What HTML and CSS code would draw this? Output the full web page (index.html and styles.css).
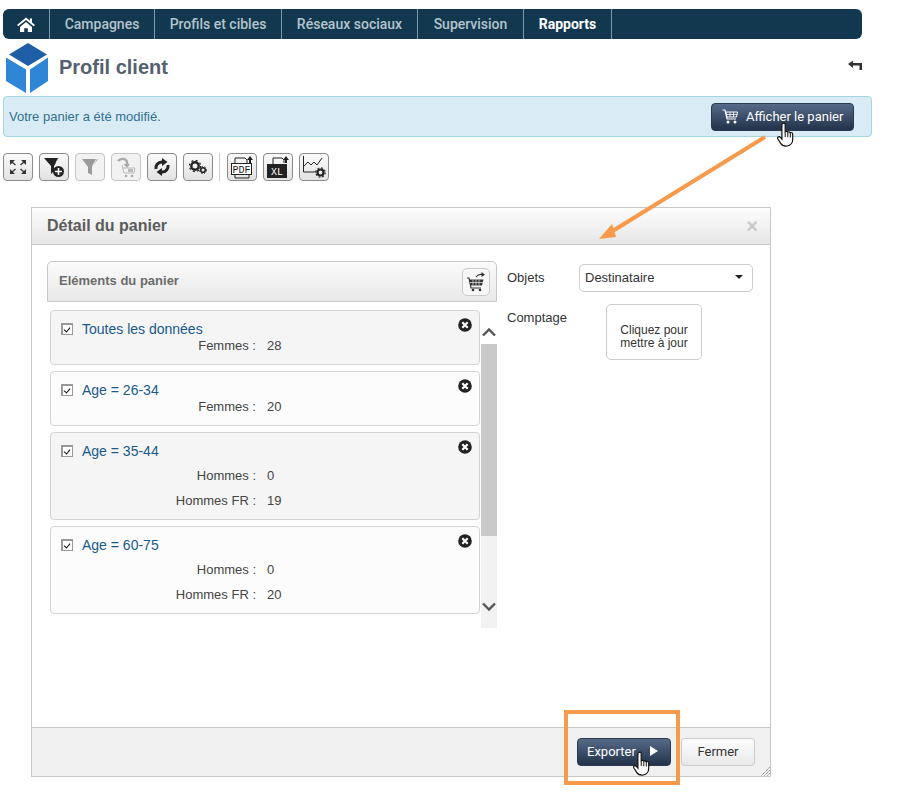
FILE: index.html
```html
<!DOCTYPE html>
<html lang="fr">
<head>
    <meta charset="UTF-8">
    <meta name="viewport" content="width=device-width, initial-scale=1.0">
    <title>Profil client</title>
    <link rel="stylesheet" href="styles.css">
</head>
<body>
    <svg class="defs" width="0" height="0">
        <symbol id="hand" viewBox="0 0 18 26">
            <path d="M6 1.500c1-.8 2.200 0 2.200 1.200v7l1-.3c.7-.2 1.300.1 1.500.6l.9-.1c.7-.1 1.200.2 1.400.7l.9-.1c1-.1 1.800.6 1.800 1.700v5.300c0 3-2 6-5.500 6.500-3.500.4-5.500-.8-6.500-2.600L1 17.200c-.6-1-.5-1.800.2-2.300.8-.5 1.600-.2 2.200.5l1.500 1.700V2.800c0-.5.300-1 1.100-1.300z" fill="#fff" stroke="#111" stroke-width="1.200"/>
            <path d="M8.200 10v5M10.800 10.200v5M13.300 10.700v4.800" fill="none" stroke="#111" stroke-width="1"/>
        </symbol>
        <symbol id="close" viewBox="0 0 14 14">
            <circle cx="7" cy="7" r="6.800" fill="#222"/>
            <path d="M4.300 4.300l5.400 5.400M9.700 4.300l-5.400 5.400" stroke="#fff" stroke-width="2.200"/>
        </symbol>
    </svg>

    <div class="page">
        <nav class="topnav">
            <a class="topnav-item topnav-home" href="#">
                <svg width="18" height="15" viewBox="0 0 18 15"><path d="M9 .5L0 8l1.300 1.300L9 3l7.700 6.300L18 8l-3-2.500V1.500h-2.200v2.200z" fill="#fff"/><path d="M3 10l6-5 6 5v5h-4.200v-3.800H7.200V15H3z" fill="#fff"/></svg>
            </a>
            <a class="topnav-item topnav-w105" href="#">Campagnes</a>
            <a class="topnav-item topnav-w127" href="#">Profils et cibles</a>
            <a class="topnav-item topnav-w136" href="#">Réseaux sociaux</a>
            <a class="topnav-item topnav-w106" href="#">Supervision</a>
            <a class="topnav-item topnav-w88 active" href="#">Rapports</a>
        </nav>

        <header class="title-row">
            <svg class="logo" width="44" height="50" viewBox="0 0 44 50">
                <path d="M22 0L41 11.500 22 23 3 11.500z" fill="#1f5fa8"/>
                <path d="M0 14.500L20 26.500V50L0 38z" fill="#2f86d6"/>
                <path d="M42 14.500L24 26.500V50l18-12z" fill="#2f86d6"/>
            </svg>
            <h1>Profil client</h1>
            <svg class="back" width="14" height="10" viewBox="0 0 14 10"><path d="M0 4L5 .5V3h9v7h-2.500V5.500H5V8z" fill="#333"/></svg>
        </header>

        <div class="message">
            <span>Votre panier a été modifié.</span>
            <button class="btn-dark btn-cart">
                <svg width="16" height="15" viewBox="0 0 16 15"><path d="M.5 1H3l2 9h9" fill="none" stroke="#fff" stroke-width="1.200"/><path d="M4 3h11.500l-1 5H5z" fill="none" stroke="#fff"/><path d="M4.500 5.500h10.500M8 3v5M11.500 3v5" stroke="#fff" stroke-width=".8"/><circle cx="6" cy="13" r="1.500" fill="#fff"/><circle cx="13" cy="13" r="1.500" fill="#fff"/></svg>
                Afficher le panier
            </button>
        </div>

        <div class="toolbar">
            <button class="tool">
                <svg width="18" height="16" viewBox="0 0 18 16"><path d="M1 1h5L1 6zM17 1v5l-5-5zM1 15v-5l5 5zM17 15h-5l5-5z" fill="#333"/><path d="M3 3l3.500 3M15 3l-3.500 3M3 13l3.500-3M15 13l-3.500-3" stroke="#333" stroke-width="1.300"/></svg>
            </button>
            <button class="tool">
                <svg width="22" height="22" viewBox="0 0 22 22"><path d="M1 2h15l-5 8v5l-3 3v-8z" fill="#222"/><path d="M13 7l3-6" stroke="#eee"/><circle cx="15.500" cy="15.500" r="5.500" fill="#222"/><path d="M15.500 12v7M12 15.500h7" stroke="#fff" stroke-width="1.600"/></svg>
            </button>
            <button class="tool tool-off">
                <svg width="18" height="20" viewBox="0 0 18 20"><path d="M1 2h16l-6 8v8l-4-2v-6z" fill="#9a9a9a"/><path d="M11.500 9l4-7" stroke="#eee"/></svg>
            </button>
            <button class="tool tool-off">
                <svg width="20" height="22" viewBox="0 0 20 22"><path d="M2 5c3-3 8-3 9 1v3" fill="none" stroke="#aaa" stroke-width="2.400"/><path d="M7.500 8l3.500 4 3-4z" fill="#aaa"/><path d="M6 12h13l-1 5H8L6 9" fill="none" stroke="#bbb"/><path d="M12 13h5v3h-5z" fill="#bbb"/><circle cx="10" cy="20" r="1.300" fill="#aaa"/><circle cx="16" cy="20" r="1.300" fill="#aaa"/></svg>
            </button>
            <button class="tool">
                <svg width="20" height="18" viewBox="0 0 20 18"><path d="M4 11A6 6 0 0 1 10 4" fill="none" stroke="#222" stroke-width="3"/><path d="M10 0l5.500 4L10 8z" fill="#222"/><path d="M16 7A6 6 0 0 1 10 14" fill="none" stroke="#222" stroke-width="3"/><path d="M10 10l-5.500 4L10 18z" fill="#222"/></svg>
            </button>
            <button class="tool">
                <svg width="18" height="14" viewBox="0 0 18 14"><circle cx="6" cy="6" r="3.700" fill="none" stroke="#222" stroke-width="2.400"/><circle cx="6" cy="6" r="5.600" fill="none" stroke="#222" stroke-width="1.200" stroke-dasharray="2 2.400"/><circle cx="14" cy="10" r="2.300" fill="none" stroke="#222" stroke-width="1.600"/><circle cx="14" cy="10" r="3.600" fill="none" stroke="#222" stroke-width=".9" stroke-dasharray="1.500 1.500"/></svg>
            </button>
            <span class="tool-sep"></span>
            <button class="tool">
                <svg width="24" height="24" viewBox="0 0 24 24"><path d="M5 9V3h10l2 2v3" fill="none" stroke="#222"/><path d="M20 1l3 4h-2v3h-2V5h-2z" fill="#222"/><rect x="1.500" y="8.500" width="20" height="11" fill="#fff" stroke="#222"/><text class="tool-label" x="11.500" y="18" text-anchor="middle">PDF</text><path d="M5 20v3h14v-3" fill="none" stroke="#222"/></svg>
            </button>
            <button class="tool">
                <svg width="24" height="24" viewBox="0 0 24 24"><path d="M7 9V3h9l2 2v3" fill="none" stroke="#222"/><path d="M20 1l3 4h-2v3h-2V5h-2z" fill="#222"/><rect x="1" y="9" width="20" height="14" fill="#222"/><text class="tool-label tool-label-xl" x="11" y="19.500" text-anchor="middle">XL</text></svg>
            </button>
            <button class="tool">
                <svg width="24" height="24" viewBox="0 0 24 24"><path d="M1.500 1v16H14" fill="none" stroke="#222"/><path d="M2 11l4-4 3 3 3-3 3 3 5-7" fill="none" stroke="#222"/><circle cx="18.500" cy="17.500" r="3" fill="none" stroke="#222" stroke-width="2.200"/><circle cx="18.500" cy="17.500" r="4.700" fill="none" stroke="#222" stroke-width="1.200" stroke-dasharray="1.800 1.900"/></svg>
            </button>
        </div>

        <section class="modal">
            <div class="modal-head">
                <h2>Détail du panier</h2>
                <span class="modal-x">×</span>
            </div>
            <div class="modal-body">
                <div class="col-left">
                    <div class="panel-head">
                        <span class="panel-title">Eléments du panier</span>
                        <button class="cart-btn">
                            <svg width="20" height="20" viewBox="0 0 20 20"><path d="M1 6h2l2 10h10" fill="none" stroke="#333" stroke-width="1.200"/><path d="M3.500 7.500h14l-1.500 6H5z" fill="#333"/><path d="M7 7.500v6M10 7.500v6M13 7.500v6M4 10.500h13" stroke="#eee" stroke-width=".7"/><circle cx="7" cy="18" r="1.300" fill="#333"/><circle cx="14" cy="18" r="1.300" fill="#333"/><path d="M10 5c2-2.500 4-3 6-2.500" fill="none" stroke="#333" stroke-width="1.200"/><path d="M15.500 0l3.500 2.800-3.500 2.200z" fill="#333"/></svg>
                        </button>
                    </div>
                    <div class="list-wrap">
                        <div class="list">
                            <div class="card card-shade card-small">
                                <div class="card-title"><span class="check"></span>Toutes les données</div>
                                <div class="card-rows">
                                    <div class="card-row"><span class="row-label">Femmes :</span><span>28</span></div>
                                </div>
                                <svg class="card-x"><use href="#close"/></svg>
                            </div>
                            <div class="card card-small">
                                <div class="card-title"><span class="check"></span>Age = 26-34</div>
                                <div class="card-rows">
                                    <div class="card-row"><span class="row-label">Femmes :</span><span>20</span></div>
                                </div>
                                <svg class="card-x"><use href="#close"/></svg>
                            </div>
                            <div class="card card-shade">
                                <div class="card-title"><span class="check"></span>Age = 35-44</div>
                                <div class="card-rows">
                                    <div class="card-row"><span class="row-label">Hommes :</span><span>0</span></div>
                                    <div class="card-row"><span class="row-label">Hommes FR :</span><span>19</span></div>
                                </div>
                                <svg class="card-x"><use href="#close"/></svg>
                            </div>
                            <div class="card">
                                <div class="card-title"><span class="check"></span>Age = 60-75</div>
                                <div class="card-rows">
                                    <div class="card-row"><span class="row-label">Hommes :</span><span>0</span></div>
                                    <div class="card-row"><span class="row-label">Hommes FR :</span><span>20</span></div>
                                </div>
                                <svg class="card-x"><use href="#close"/></svg>
                            </div>
                        </div>
                        <div class="scrollbar">
                            <div class="scroll-btn">
                                <svg width="14" height="9" viewBox="0 0 14 9"><path d="M1 7.500l6-6 6 6" fill="none" stroke="#555" stroke-width="2.400"/></svg>
                            </div>
                            <div class="scroll-thumb"></div>
                            <div class="scroll-btn scroll-btn-down">
                                <svg width="14" height="9" viewBox="0 0 14 9"><path d="M1 1.500l6 6 6-6" fill="none" stroke="#555" stroke-width="2.400"/></svg>
                            </div>
                        </div>
                    </div>
                </div>
                <div class="col-right">
                    <div class="field">
                        <label class="field-label">Objets</label>
                        <div class="select">Destinataire<span class="caret"></span></div>
                    </div>
                    <div class="field field-count">
                        <label class="field-label">Comptage</label>
                        <button class="count-box">Cliquez pour<br>mettre à jour</button>
                    </div>
                </div>
            </div>
            <div class="modal-foot">
                <button class="btn-dark btn-export">Exporter<span class="play"></span></button>
                <button class="btn-light">Fermer</button>
                <svg class="grip" width="10" height="10" viewBox="0 0 10 10"><path d="M9.500 1.500l-8 8M9.500 4.500l-5 5M9.500 7.500l-2 2" stroke="#555" stroke-dasharray="1 1"/></svg>
            </div>
        </section>

        <!-- annotations par dessus la capture -->
        <svg class="arrow" width="899" height="808" viewBox="0 0 899 808">
            <path d="M765 137L611 232" stroke="#f79a4b" stroke-width="4"/>
            <path d="M599 239L612 224 616 237z" fill="#f79a4b"/>
        </svg>
        <div class="highlight"></div>
        <svg class="cursor cursor-top"><use href="#hand"/></svg>
        <svg class="cursor cursor-bottom"><use href="#hand"/></svg>
    </div>
</body>
</html>
```

FILE: styles.css
```css
body {
    margin: 0;
    background: #fff;
    font-family: "Liberation Sans", Arial, sans-serif;
    font-size: 13px;
    color: #333;
}
button {
    font-family: inherit;
    cursor: pointer;
}
.defs {
    display: block;
    height: 0;
}
.page {
    position: relative;
    width: 899px;
    height: 808px;
    overflow: hidden;
    padding: 9px 0 0 3px;
    box-sizing: border-box;
}

/* barre du haut */
.topnav {
    display: flex;
    width: 859px;
    height: 30px;
    background: #12384f;
    border-radius: 6px;
}
.topnav-item {
    display: flex;
    align-items: center;
    justify-content: center;
    box-sizing: border-box;
    height: 30px;
    border-right: 1px solid #7f9aaa;
    font-family: Roboto, sans-serif;
    font-size: 14px;
    font-weight: 500;
    color: #b4c4ce;
    text-decoration: none;
}
.topnav-home { width: 47px; }
.topnav-w105 { width: 105px; }
.topnav-w127 { width: 127px; }
.topnav-w136 { width: 136px; }
.topnav-w106 { width: 106px; }
.topnav-w88 { width: 88px; }
.topnav-item.active {
    color: #fff;
    font-weight: 700;
}

/* titre */
.title-row {
    display: flex;
    align-items: center;
    width: 859px;
    height: 57px;
}
.logo {
    margin: 0 0 0 3px;
}
.title-row h1 {
    flex: 1;
    margin: 0 0 0 9px;
    font-size: 20px;
    font-weight: 700;
    color: #56616f;
}
.back {
    margin-bottom: 6px;
}

/* message */
.message {
    display: flex;
    align-items: center;
    justify-content: space-between;
    box-sizing: border-box;
    width: 869px;
    height: 41px;
    padding: 0 17px 0 5px;
    background: #d9ecf5;
    border: 1px solid #a5d5e2;
    border-radius: 4px;
    color: #31708f;
}
.btn-dark {
    display: flex;
    align-items: center;
    box-sizing: border-box;
    height: 28px;
    border: 1px solid #2b3a50;
    border-radius: 4px;
    background: linear-gradient(#566a88, #22324a);
    font-family: Roboto, sans-serif;
    font-size: 13px;
    color: #fff;
}
.btn-cart {
    width: 143px;
    padding: 0 0 0 10px;
    gap: 8px;
}

/* barre d'outils */
.toolbar {
    display: flex;
    align-items: center;
    gap: 6px;
    margin-top: 16px;
    height: 28px;
}
.tool {
    display: flex;
    align-items: center;
    justify-content: center;
    box-sizing: border-box;
    width: 30px;
    height: 28px;
    padding: 0;
    border: 1px solid #8a8a8a;
    border-radius: 4px;
    background: linear-gradient(#fafafa, #e2e2e2);
}
.tool-off {
    border-color: #c4c4c4;
    background: #f2f2f2;
}
.tool-sep {
    width: 1px;
    height: 28px;
    margin: 0 1px 0 0;
    background: #ccc;
}
.tool-label {
    font-family: "Liberation Mono", monospace;
    font-size: 10px;
    fill: #222;
}
.tool-label-xl {
    fill: #fff;
}

/* fenetre */
.modal {
    display: flex;
    flex-direction: column;
    box-sizing: border-box;
    width: 740px;
    height: 570px;
    margin: 26px 0 0 28px;
    border: 1px solid #c8c8c8;
}
.modal-head {
    display: flex;
    align-items: center;
    justify-content: space-between;
    box-sizing: border-box;
    height: 37px;
    padding: 0 12px 0 15px;
    background: linear-gradient(#fdfdfd, #e6e6e6);
    border-bottom: 1px solid #c8c8c8;
}
.modal-head h2 {
    margin: 0;
    font-size: 16px;
    font-weight: 700;
    color: #5c5c5c;
}
.modal-x {
    font-size: 20px;
    font-weight: 700;
    color: #c8c8c8;
}
.modal-body {
    flex: 1;
    display: flex;
    gap: 10px;
    padding: 16px 0 0 15px;
}
.col-left {
    width: 450px;
}
.panel-head {
    display: flex;
    align-items: center;
    justify-content: space-between;
    box-sizing: border-box;
    height: 41px;
    padding: 0 6px 0 11px;
    border: 1px solid #c8c8c8;
    border-radius: 5px 5px 0 0;
    background: linear-gradient(#fbfbfb, #e8e8e8);
    font-size: 13px;
    font-weight: 700;
    color: #6c6c6c;
}
.panel-title {
    margin-bottom: 2px;
}
.cart-btn {
    display: flex;
    align-items: center;
    justify-content: center;
    width: 28px;
    height: 28px;
    padding: 0;
    border: 1px solid #ccc;
    border-radius: 5px;
    background: #f7f7f7;
}
.list-wrap {
    display: flex;
    justify-content: space-between;
    margin-top: 8px;
    padding-left: 3px;
}
.list {
    display: flex;
    flex-direction: column;
    gap: 6px;
    width: 430px;
}
.card {
    position: relative;
    box-sizing: border-box;
    height: 88px;
    padding-top: 8px;
    background: #fcfcfc;
    border: 1px solid #d4d4d4;
    border-radius: 4px;
}
.card-shade {
    background: #f5f5f5;
}
.card-small {
    height: 55px;
}
.card-title {
    display: flex;
    align-items: center;
    height: 20px;
    padding-left: 10px;
    font-size: 14px;
    color: #19598a;
}
.check {
    position: relative;
    box-sizing: border-box;
    width: 12px;
    height: 12px;
    margin-right: 9px;
    background: #fff;
    border: solid #999;
    border-width: 2px 1px 1px 2px;
}
.check::after {
    content: "";
    position: absolute;
    left: 2px;
    top: 1px;
    width: 3px;
    height: 5px;
    border: solid #111;
    border-width: 0 1.500px 1.500px 0;
    transform: rotate(40deg);
}
.card-rows {
    margin-top: 2px;
}
.card-small .card-rows {
    margin-top: 0;
}
.card-row {
    display: flex;
    gap: 11px;
    line-height: 25px;
    color: #444;
}
.card-small .card-row {
    line-height: 14px;
}
.row-label {
    width: 205px;
    text-align: right;
}
.card-x {
    position: absolute;
    top: 7px;
    right: 7px;
    width: 14px;
    height: 14px;
}
.scrollbar {
    display: flex;
    flex-direction: column;
    width: 16px;
    height: 318px;
    background: #f2f2f2;
}
.scroll-btn {
    display: flex;
    align-items: flex-end;
    justify-content: center;
    height: 34px;
    padding-bottom: 7px;
    box-sizing: border-box;
    background: #fff;
}
.scroll-btn-down {
    align-items: center;
    height: 20px;
    margin-top: 60px;
    padding: 0;
    background: transparent;
}
.scroll-thumb {
    height: 192px;
    background: #c9c9c9;
}
.col-right {
    width: 246px;
    color: #333;
}
.field {
    display: flex;
    align-items: center;
    margin-top: 3px;
}
.field-count {
    align-items: flex-start;
    margin-top: 12px;
}
.field-label {
    flex: none;
    width: 72px;
    margin-bottom: 2px;
}
.field-count .field-label {
    width: 99px;
    margin-top: 6px;
}
.select {
    position: relative;
    box-sizing: border-box;
    width: 174px;
    height: 28px;
    padding-left: 5px;
    line-height: 26px;
    background: #fff;
    border: 1px solid #ccc;
    border-radius: 5px;
}
.caret {
    position: absolute;
    right: 9px;
    top: 10px;
    border: 4px solid transparent;
    border-top-color: #222;
    border-bottom: 0;
}
.count-box {
    box-sizing: border-box;
    width: 96px;
    height: 56px;
    padding: 10px 0 0;
    background: #fff;
    border: 1px solid #ccc;
    border-radius: 5px;
    font-size: 12px;
    line-height: 13px;
    color: #333;
}
.modal-foot {
    position: relative;
    display: flex;
    align-items: center;
    justify-content: flex-end;
    gap: 10px;
    box-sizing: border-box;
    height: 49px;
    padding: 0 15px 0 0;
    background: #f0f0f0;
    border-top: 1px solid #c8c8c8;
}
.btn-export {
    width: 94px;
    padding: 0 0 2px 9px;
}
.play {
    width: 0;
    height: 0;
    margin-left: 14px;
    border-left: 8px solid #fff;
    border-top: 5px solid transparent;
    border-bottom: 5px solid transparent;
}
.btn-light {
    box-sizing: border-box;
    width: 74px;
    height: 28px;
    padding: 0 0 2px;
    border: 1px solid #ccc;
    border-radius: 4px;
    background: linear-gradient(#fdfdfd, #e9e9e9);
    font-family: Roboto, sans-serif;
    font-size: 13px;
    color: #333;
}
.grip {
    position: absolute;
    right: 0;
    bottom: 0;
}

/* annotations */
.arrow {
    position: absolute;
    left: 0;
    top: 0;
    pointer-events: none;
}
.highlight {
    position: absolute;
    left: 564px;
    top: 710px;
    width: 116px;
    height: 75px;
    box-sizing: border-box;
    border: 4px solid #f79a4b;
}
.cursor {
    position: absolute;
    width: 18px;
    height: 26px;
}
.cursor-top {
    left: 777px;
    top: 122px;
}
.cursor-bottom {
    left: 633px;
    top: 751px;
}
```
